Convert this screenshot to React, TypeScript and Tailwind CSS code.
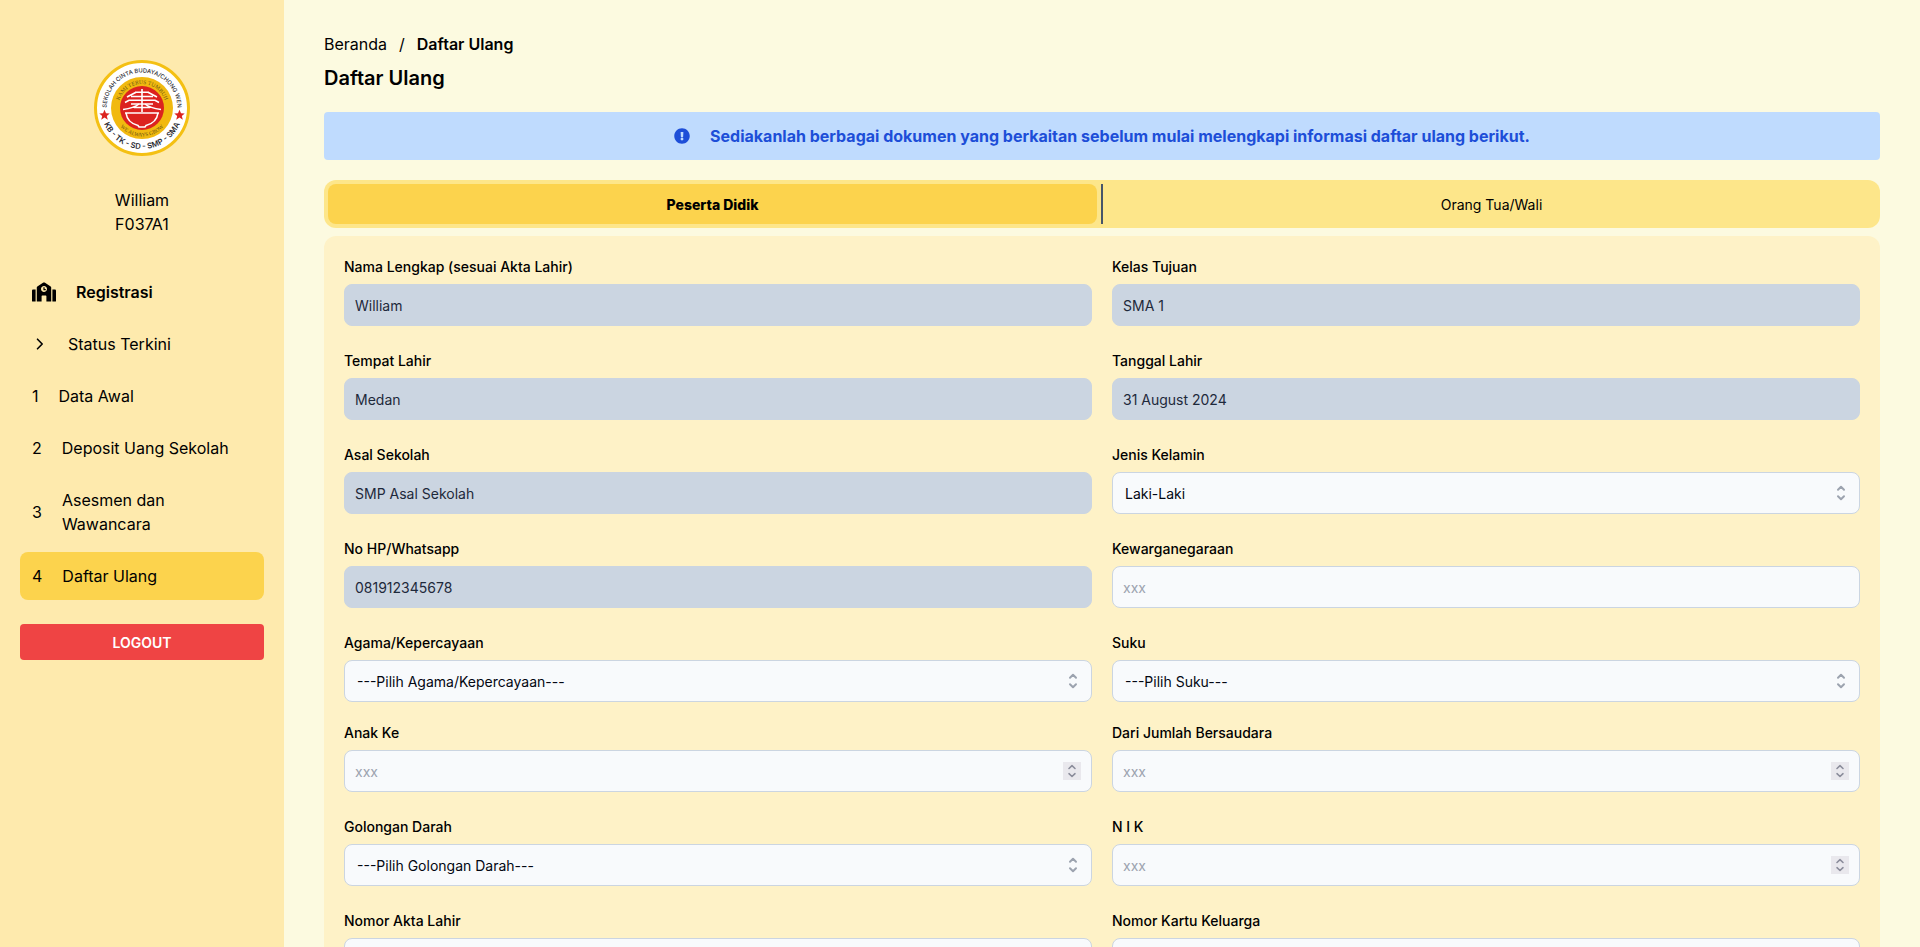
import { useId, useState } from "react";
import type { ReactNode } from "react";
import { FaExclamationCircle, FaSchool } from "react-icons/fa";

function SchoolLogo() {
  return (
    <svg viewBox="-48 -48 96 96" className="size-24" role="img" aria-label="Sekolah Cinta Budaya">
      <defs>
        <path id="logo-outer-top" d="M-35.5 1.5L-35.5 0A35.5 35.5 0 0 1 35.5 0L35.5 1.5" />
        <path id="logo-outer-bottom" d="M-41 0A41 41 0 0 0 41 0" />
        <path id="logo-inner-top" d="M-24 0A24 24 0 0 1 24 0" />
        <path id="logo-inner-bottom" d="M-28.5 0A28.5 28.5 0 0 0 28.5 0" />
      </defs>
      <circle r="46.5" fill="#fff" stroke="#f4c013" strokeWidth="3" />
      <circle r="31" fill="#f1b90f" />
      <circle r="22" fill="#dc231f" />
      <g fill="#2b2b33" fontFamily="Inter, sans-serif" textAnchor="middle">
        <text fontSize="5.8" fontWeight="500">
          <textPath href="#logo-outer-top" startOffset="50%">SEKOLAH CINTA BUDAYA/CHONG WEN</textPath>
        </text>
        <text fontSize="7.7" fontWeight="600">
          <textPath href="#logo-outer-bottom" startOffset="50%">KB - TK - SD - SMP - SMA</textPath>
        </text>
      </g>
      <g fill="#6b5614" fontFamily="'Liberation Serif', serif" textAnchor="middle">
        <text fontSize="5.6">
          <textPath href="#logo-inner-top" startOffset="50%">KAMI TERUS TUMBUH</textPath>
        </text>
        <text fontSize="5.4">
          <textPath href="#logo-inner-bottom" startOffset="50%">WE ALWAYS GROW</textPath>
        </text>
      </g>
      <g fill="#dc231f">
        <path d="M-37.5 1.8l1.5 3.4 3.7.3-2.9 2.4 1 3.8-3.3-2.1-3.3 2.1 1-3.8-2.9-2.4 3.7-.3z" />
        <path d="M37.5 1.8l1.5 3.4 3.7.3-2.9 2.4 1 3.8-3.3-2.1-3.3 2.1 1-3.8-2.9-2.4 3.7-.3z" />
      </g>
      <g fill="none" stroke="#fff" strokeWidth="1.6">
        <path d="M0-19V-1M-7-15.8H7M-6-15.8L-15-11M6-15.8L15-11M-11-11.5H11M-17-5.5L-13-7.8H13L17-5.5M-11-4H11" />
        <path d="M-3-4Q-8 0-19 1.5M3-4Q8 0 19 1.5M-8-.5H8M0-1V4" />
        <path d="M-17 5H17M-16 5C-15 12-10 16-4 17.5L-3 19H3L4 17.5C10 16 15 12 16 5" />
      </g>
    </svg>
  );
}

function ChevronRight() {
  return (
    <svg viewBox="0 0 16 16" className="size-4 shrink-0" fill="none" stroke="currentColor" strokeWidth="1.6" strokeLinecap="round" strokeLinejoin="round" aria-hidden="true">
      <path d="M5.5 3.2L10.2 8L5.5 12.8" />
    </svg>
  );
}

function NavItem({ mark, bold, active, children }: { mark: ReactNode; bold?: boolean; active?: boolean; children: ReactNode }) {
  const weight = bold ? "font-semibold" : "font-normal";
  const fill = active ? "bg-[#fcd34d]" : "";
  return (
    <li>
      <a href="#" aria-current={active ? "page" : undefined} className={`flex items-center gap-5 rounded-lg p-3 ${weight} ${fill}`}>
        {mark}
        <span>{children}</span>
      </a>
    </li>
  );
}

function Sidebar() {
  return (
    <aside className="flex w-71 shrink-0 flex-col bg-[#feeaad] px-5 pt-15">
      <div className="flex flex-col items-center">
        <SchoolLogo />
        <p className="mt-8">William</p>
        <p>F037A1</p>
      </div>
      <nav className="mt-8">
        <ul className="flex flex-col gap-1">
          <NavItem bold mark={<FaSchool size={24} className="shrink-0" />}>Registrasi</NavItem>
          <NavItem mark={<ChevronRight />}>Status Terkini</NavItem>
          <NavItem mark={<span>1</span>}>Data Awal</NavItem>
          <NavItem mark={<span>2</span>}>Deposit Uang Sekolah</NavItem>
          <NavItem mark={<span>3</span>}>Asesmen dan Wawancara</NavItem>
          <NavItem active mark={<span>4</span>}>Daftar Ulang</NavItem>
        </ul>
      </nav>
      <button type="button" className="mt-6 rounded bg-[#ef4444] pt-[9px] pb-[7px] text-sm font-semibold text-white">
        LOGOUT
      </button>
    </aside>
  );
}

type FieldSpec = {
  label: string;
  kind: "locked" | "text" | "number" | "select";
  value?: string;
};

const personal: FieldSpec[] = [
  { label: "Nama Lengkap (sesuai Akta Lahir)", kind: "locked", value: "William" },
  { label: "Kelas Tujuan", kind: "locked", value: "SMA 1" },
  { label: "Tempat Lahir", kind: "locked", value: "Medan" },
  { label: "Tanggal Lahir", kind: "locked", value: "31 August 2024" },
  { label: "Asal Sekolah", kind: "locked", value: "SMP Asal Sekolah" },
  { label: "Jenis Kelamin", kind: "select", value: "Laki-Laki" },
  { label: "No HP/Whatsapp", kind: "locked", value: "081912345678" },
  { label: "Kewarganegaraan", kind: "text" },
  { label: "Agama/Kepercayaan", kind: "select", value: "---Pilih Agama/Kepercayaan---" },
  { label: "Suku", kind: "select", value: "---Pilih Suku---" },
];

const family: FieldSpec[] = [
  { label: "Anak Ke", kind: "number" },
  { label: "Dari Jumlah Bersaudara", kind: "number" },
  { label: "Golongan Darah", kind: "select", value: "---Pilih Golongan Darah---" },
  { label: "N I K", kind: "number" },
  { label: "Nomor Akta Lahir", kind: "text" },
  { label: "Nomor Kartu Keluarga", kind: "number" },
];

function UpDown() {
  return (
    <svg viewBox="0 0 10 16" className="h-4 w-2.5" fill="none" stroke="currentColor" strokeWidth="2" strokeLinecap="round" strokeLinejoin="round" aria-hidden="true">
      <path d="M2 4.7L5 1.8L8 4.7M2 11.3L5 14.2L8 11.3" />
    </svg>
  );
}

function StepArrows() {
  return (
    <svg viewBox="0 0 18 18" className="size-[18px]" fill="none" stroke="currentColor" strokeWidth="1.6" strokeLinecap="round" strokeLinejoin="round" aria-hidden="true">
      <path d="M6 6.5L9 3.7L12 6.5M6 11.7L9 14.5L12 11.7" />
    </svg>
  );
}

function Field({ label, kind, value }: FieldSpec) {
  const id = useId();
  const box = "block h-[42px] w-full rounded-lg border text-sm";
  const open = "border-[#cbd5e1] bg-[#f8fafc] text-[#030712] placeholder:text-[#9ca3af]";
  return (
    <div>
      <label htmlFor={id} className="mb-1.5 block text-sm leading-[22px] font-medium">
        {label}
      </label>
      {kind === "locked" && (
        <input id={id} disabled value={value} className={`${box} border-[#cbd5e1] bg-[#cbd5e1] px-2.5 text-[#1e293b]`} />
      )}
      {kind === "text" && <input id={id} type="text" placeholder="xxx" className={`${box} ${open} px-2.5`} />}
      {kind === "number" && (
        <div className="relative">
          <input
            id={id}
            type="number"
            placeholder="xxx"
            className={`${box} ${open} pr-8 pl-2.5 [appearance:textfield] [&::-webkit-inner-spin-button]:appearance-none`}
          />
          <span className="pointer-events-none absolute inset-y-3 right-[11px] bg-[#e9e8ed] text-[#8b8d9b]">
            <StepArrows />
          </span>
        </div>
      )}
      {kind === "select" && (
        <div className="relative">
          <select id={id} className={`${box} ${open} appearance-none px-3 pt-0.5`}>
            <option>{value}</option>
          </select>
          <span className="pointer-events-none absolute inset-y-0 right-3.5 flex items-center text-[#9ca3af]">
            <UpDown />
          </span>
        </div>
      )}
    </div>
  );
}

function FieldGrid({ fields }: { fields: FieldSpec[] }) {
  return (
    <div className="grid grid-cols-2 gap-x-5 gap-y-6">
      {fields.map((f) => (
        <Field key={f.label} {...f} />
      ))}
    </div>
  );
}

function Tabs() {
  const [tab, setTab] = useState(0);
  const look = (on: boolean) => (on ? "bg-[#fcd34d] font-extrabold" : "font-normal");
  return (
    <div role="tablist" className="mt-5 flex gap-1 rounded-xl bg-[#fde68a] p-1 text-sm">
      <button type="button" role="tab" aria-selected={tab === 0} onClick={() => setTab(0)} className={`h-10 flex-1 rounded-lg pt-0.5 ${look(tab === 0)}`}>
        Peserta Didik
      </button>
      <div className="w-0.5 bg-[#475569]" />
      <button type="button" role="tab" aria-selected={tab === 1} onClick={() => setTab(1)} className={`h-10 flex-1 rounded-lg pt-0.5 ${look(tab === 1)}`}>
        Orang Tua/Wali
      </button>
    </div>
  );
}

export default function App() {
  return (
    <div className="flex h-screen bg-[#fcfae0] font-[Inter,sans-serif] text-black">
      <Sidebar />
      <main className="flex-1 overflow-y-auto px-10 py-8 [scrollbar-width:none]">
        <nav aria-label="Breadcrumb">
          <ol className="flex gap-3">
            <li>
              <a href="#">Beranda</a>
            </li>
            <li aria-hidden="true">/</li>
            <li className="font-semibold">Daftar Ulang</li>
          </ol>
        </nav>
        <h1 className="mt-2 text-xl font-semibold">Daftar Ulang</h1>
        <div role="alert" className="mt-5 flex items-center justify-center gap-5 rounded bg-[#bfdbfe] p-3 font-bold text-[#1d4ed8]">
          <FaExclamationCircle size={16} />
          <p>Sediakanlah berbagai dokumen yang berkaitan sebelum mulai melengkapi informasi daftar ulang berikut.</p>
        </div>
        <Tabs />
        <form className="mt-2 flex flex-col gap-5 rounded-xl bg-[#fef2c7] p-5">
          <FieldGrid fields={personal} />
          <FieldGrid fields={family} />
        </form>
      </main>
    </div>
  );
}
